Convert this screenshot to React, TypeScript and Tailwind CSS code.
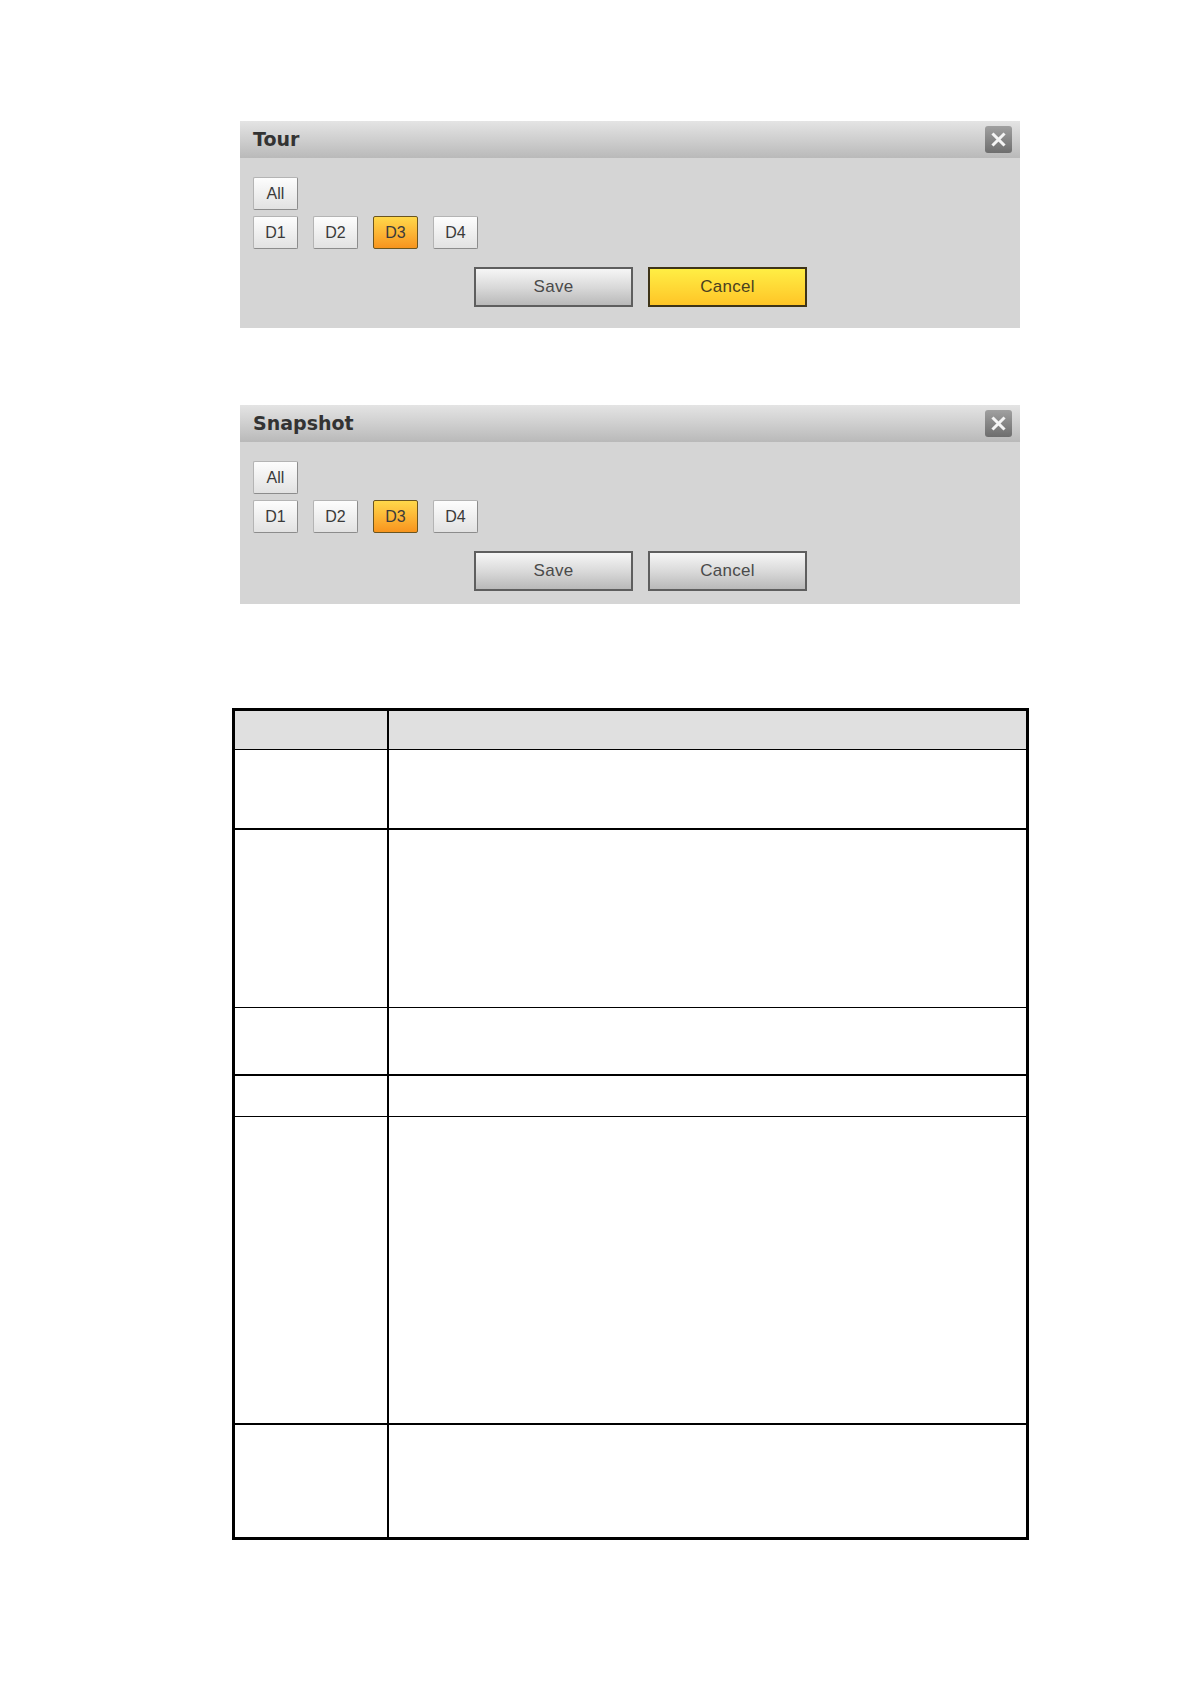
const channels = ["D1", "D2", "D3", "D4"];

function SmallButton({ label, active }: { label: string; active?: boolean }) {
  return (
    <div
      className={
        active
          ? "w-[45px] h-[33px] flex items-center justify-center text-[16px] text-[#3a3a3a] border border-[#6b5520] rounded-[2px] bg-gradient-to-b from-[#ffd84a] to-[#f7941d]"
          : "w-[45px] h-[33px] flex items-center justify-center text-[16px] text-[#3a3a3a] border border-[#b4b4b4] border-r-[#8c8c8c] border-b-[#8c8c8c] rounded-[2px] bg-gradient-to-b from-[#fdfdfd] to-[#e2e2e2]"
      }
    >
      {label}
    </div>
  );
}

function CloseButton() {
  return (
    <div className="w-[27px] h-[27px] rounded-[3px] bg-gradient-to-b from-[#a0a0a0] to-[#6e6e6e] flex items-center justify-center">
      <svg width="15" height="15" viewBox="0 0 15 15">
        <path d="M2.5 2.5 L12.5 12.5 M12.5 2.5 L2.5 12.5" stroke="#f4f4f4" strokeWidth="3" strokeLinecap="square" />
      </svg>
    </div>
  );
}

interface PanelProps {
  title: string;
  cancelActive?: boolean;
  bottomPad: string;
}

function Panel({ title, cancelActive, bottomPad }: PanelProps) {
  return (
    <div className="ml-[240px] w-[780px] bg-[#d5d5d5]">
      <div className="h-[37px] flex items-center justify-between pl-[13px] pr-[8px] bg-gradient-to-b from-[#e4e4e4] via-[#cfcfcf] to-[#b9b9b9]">
        <span className="text-[19px] font-bold text-[#333333] font-['DejaVu_Sans',sans-serif]">
          {title}
        </span>
        <CloseButton />
      </div>
      <div className={`pl-[13px] pt-[19px] ${bottomPad}`}>
        <SmallButton label="All" />
        <div className="mt-[6px] flex gap-[15px]">
          {channels.map((c) => (
            <SmallButton key={c} label={c} active={c === "D3"} />
          ))}
        </div>
        <div className="mt-[18px] ml-[221px] flex gap-[15px]">
          <div className="w-[159px] h-[40px] flex items-center justify-center text-[17px] tracking-[0.3px] text-[#4a4a4a] border-2 border-[#5e5e5e] bg-gradient-to-b from-[#f6f6f6] via-[#dadada] to-[#b9b9b9]">
            Save
          </div>
          <div
            className={
              cancelActive
                ? "w-[159px] h-[40px] flex items-center justify-center text-[17px] tracking-[0.3px] text-[#4a4020] border-2 border-[#3e3418] bg-gradient-to-b from-[#ffee44] to-[#ffc526]"
                : "w-[159px] h-[40px] flex items-center justify-center text-[17px] tracking-[0.3px] text-[#4a4a4a] border-2 border-[#5e5e5e] bg-gradient-to-b from-[#f6f6f6] via-[#dadada] to-[#b9b9b9]"
            }
          >
            Cancel
          </div>
        </div>
      </div>
    </div>
  );
}

const rows = [
  { h: "h-[39px]", line: "border-b", bg: "bg-[#e0e0e0]" },
  { h: "h-[80px]", line: "border-b-2", bg: "bg-white" },
  { h: "h-[178px]", line: "border-b", bg: "bg-white" },
  { h: "h-[68px]", line: "border-b-2", bg: "bg-white" },
  { h: "h-[41px]", line: "border-b", bg: "bg-white" },
  { h: "h-[308px]", line: "border-b-2", bg: "bg-white" },
  { h: "h-[112px]", line: "", bg: "bg-white" },
];

export default function App() {
  return (
    <div className="w-[1191px] min-h-[1684px] bg-white font-['Liberation_Sans',Arial,sans-serif]">
      <div className="pt-[121px]">
        <Panel title="Tour" cancelActive bottomPad="pb-[21px]" />
      </div>
      <div className="pt-[77px]">
        <Panel title="Snapshot" bottomPad="pb-[13px]" />
      </div>
      <div className="pt-[104px] pl-[232px]">
        <div className="w-[797px] border-[3px] border-black">
          {rows.map((r, i) => (
            <div key={i} className={`grid grid-cols-[154px_1fr] border-black ${r.h} ${r.line} ${r.bg}`}>
              <div className="border-r-2 border-black" />
              <div />
            </div>
          ))}
        </div>
      </div>
    </div>
  );
}
